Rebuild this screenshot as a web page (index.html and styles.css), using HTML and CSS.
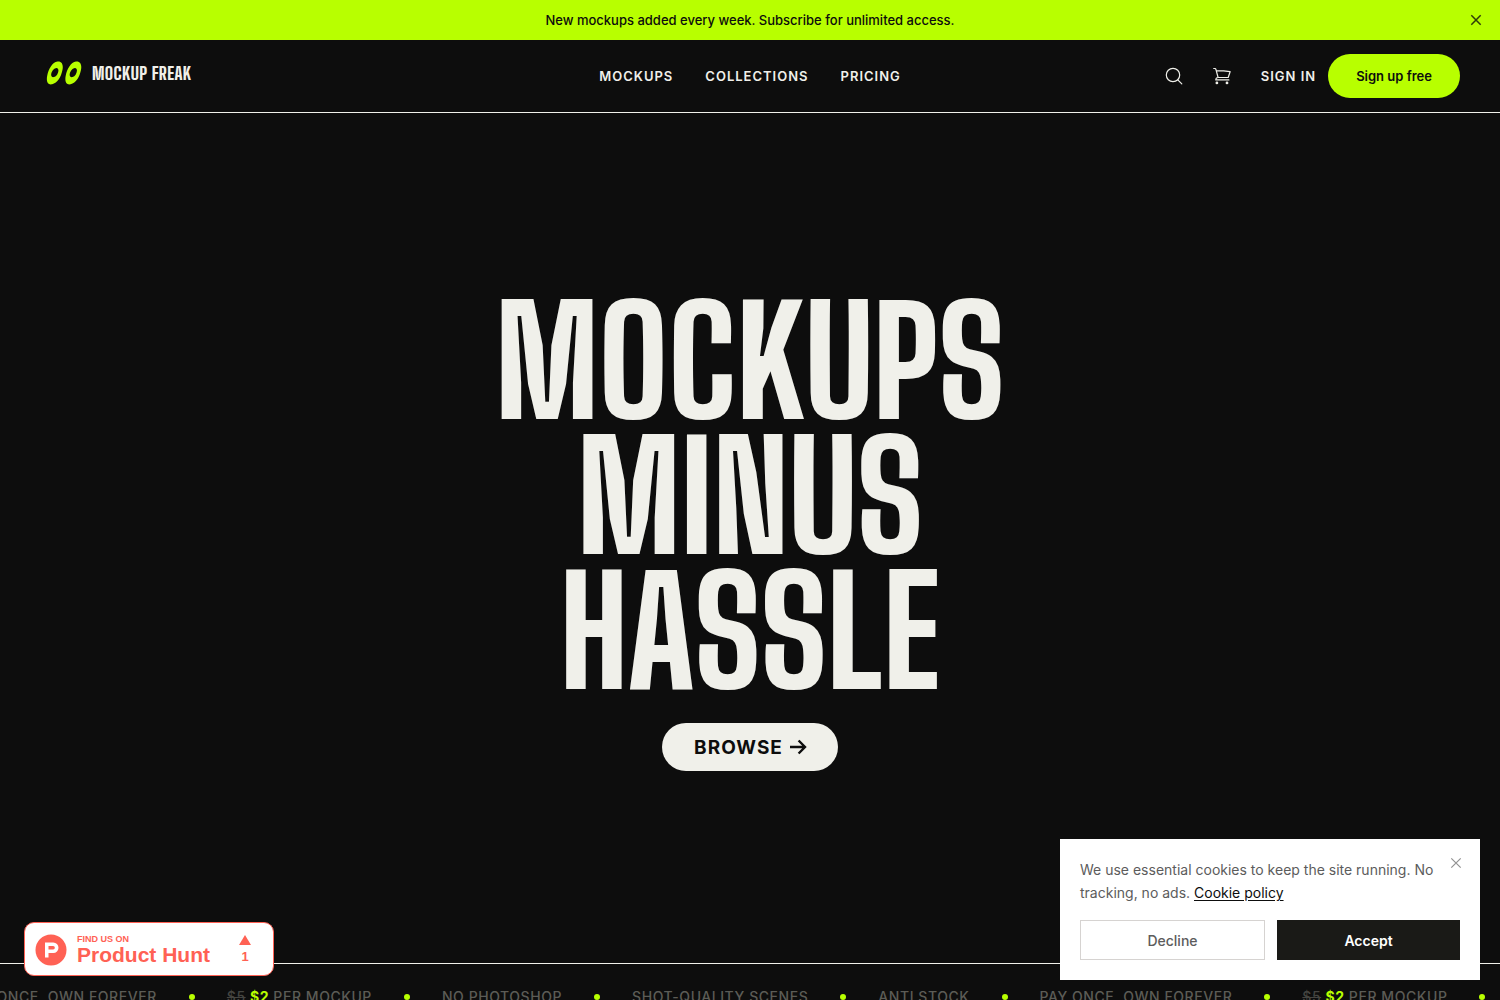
FILE: index.html
```html
<!DOCTYPE html>
<html lang="en">
<head>
<meta charset="utf-8">
<meta name="viewport" content="width=device-width, initial-scale=1">
<title>Mockup Freak</title>
<link rel="stylesheet" href="styles.css">
</head>
<body>
<div class="promo">
  <p class="promo-text">New mockups added every week. Subscribe for unlimited access.</p>
  <button class="promo-close" type="button" aria-label="Dismiss">
    <svg width="16" height="16" viewBox="0 0 16 16" fill="none" stroke="currentColor" stroke-width="1.5"><path d="M3.3 3.3l9.4 9.4M12.7 3.3l-9.4 9.4"/></svg>
  </button>
</div>

<header class="header">
  <a class="logo" href="#">
    <svg width="36" height="24" viewBox="0 0 36 24" aria-hidden="true">
      <g fill="#b8ff00" fill-rule="evenodd">
        <path d="M11.5 0.6C16 0 17.6 4.300 16.400 9.300C15.200 15.500 11.500 22.300 6.100 23.300C1.300 24.200 .2 19.800 1.200 14.800C2.500 8.300 6.300 1.300 11.500 .6ZM9.800 7.200C7.300 7.700 5.500 10.700 5.200 13.200C4.900 15.700 6.300 16.600 8.100 16.100C10.500 15.500 12.200 12.500 12.400 10.100C12.600 7.900 11.600 6.800 9.800 7.200Z"/>
        <path d="M30 .6C34.500 0 36.100 4.300 34.900 9.300C33.700 15.500 30 22.300 24.600 23.300C19.800 24.200 18.700 19.800 19.700 14.800C21 8.300 24.800 1.300 30 .6ZM28.300 7.200C25.800 7.700 24 10.700 23.700 13.200C23.400 15.700 24.800 16.600 26.600 16.100C29 15.500 30.700 12.500 30.900 10.100C31.100 7.900 30.100 6.800 28.300 7.200Z"/>
      </g>
    </svg>
    <span class="logo-name">MOCKUP FREAK</span>
  </a>
  <nav class="nav">
    <a href="#">MOCKUPS</a>
    <a href="#">COLLECTIONS</a>
    <a href="#">PRICING</a>
  </nav>
  <div class="actions">
    <button class="icon-button" type="button" aria-label="Search">
      <svg width="20" height="20" viewBox="0 0 20 20" fill="none" stroke="currentColor" stroke-width="1.2" stroke-linecap="round"><circle cx="9" cy="9" r="6.700"/><path d="M13.800 13.800l4 4"/></svg>
    </button>
    <button class="icon-button" type="button" aria-label="Cart">
      <svg width="20" height="20" viewBox="0 0 20 20" fill="none" stroke="currentColor" stroke-width="1.200" stroke-linecap="round" stroke-linejoin="round"><path d="M1.700 2.500h1.200c.5 0 .9.300 1 .8l2.200 8.200M4.400 4.600c4.800 0 9.300.3 13.700 1.100l-1.900 5.800H6.100c-1.500 0-2.300 1-2.300 2.400h13.100"/><circle cx="4.900" cy="16.900" r=".8" fill="currentColor"/><circle cx="15" cy="16.900" r=".8" fill="currentColor"/></svg>
    </button>
    <a class="sign-in" href="#">SIGN IN</a>
    <a class="sign-up" href="#">Sign up free</a>
  </div>
</header>

<main class="hero">
  <h1 class="headline">MOCKUPS<br>MINUS<br>HASSLE</h1>
  <a class="browse" href="#">BROWSE
    <svg width="18" height="18" viewBox="0 0 18 18" fill="none" stroke="currentColor" stroke-width="2.400" aria-hidden="true"><path d="M1 9h15M9.600 2.500L16 9l-6.400 6.500"/></svg>
  </a>
</main>

<section class="ticker" aria-label="Highlights">
  <ul class="ticker-track">
    <li>PAY ONCE. OWN FOREVER</li>
    <li><s>$5</s> <strong>$2</strong> PER MOCKUP</li>
    <li>NO PHOTOSHOP</li>
    <li>SHOT-QUALITY SCENES</li>
    <li>ANTI STOCK</li>
    <li>PAY ONCE. OWN FOREVER</li>
    <li><s>$5</s> <strong>$2</strong> PER MOCKUP</li>
    <li>NO PHOTOSHOP</li>
  </ul>
</section>

<a class="hunt" href="#">
  <svg class="hunt-logo" width="32" height="32" viewBox="0 0 32 32" aria-hidden="true"><circle cx="16" cy="16" r="15.500" fill="#ff6154"/><path fill="#fff" fill-rule="evenodd" d="M10 8.500h8.300a5.200 5.200 0 0 1 0 10.400H13.500v4.600H10zM13.500 12v3.500h4.600a1.750 1.750 0 0 0 0-3.500z"/></svg>
  <span class="hunt-copy">
    <span class="hunt-kicker">FIND US ON</span>
    <span class="hunt-name">Product Hunt</span>
  </span>
  <span class="hunt-votes">
    <svg width="12" height="10" viewBox="0 0 12 10" aria-hidden="true"><path d="M6 0l6 10H0z" fill="#ff6154"/></svg>
    1
  </span>
</a>

<aside class="cookies" aria-label="Cookie notice">
  <p class="cookies-text">We use essential cookies to keep the site running. No tracking, no ads. <a href="#">Cookie policy</a></p>
  <div class="cookies-actions">
    <button class="decline" type="button">Decline</button>
    <button class="accept" type="button">Accept</button>
  </div>
  <button class="cookies-close" type="button" aria-label="Close">
    <svg width="16" height="16" viewBox="0 0 16 16" fill="none" stroke="currentColor" stroke-width="1.200"><path d="M3.300 3.300l9.400 9.400M12.700 3.300l-9.400 9.400"/></svg>
  </button>
</aside>
</body>
</html>
```
FILE: styles.css
```css
:root {
  --lime: #b8ff00;
  --ink: #0d0d0d;
  --paper: #f0f0ea;
  --coral: #ff6154;
  --narrow: "Big Shoulders Display", "Liberation Sans Narrow", "Roboto Condensed", "Liberation Sans", sans-serif;
}

* { box-sizing: border-box; }

body {
  margin: 0;
  height: 100vh;
  overflow: hidden;
  background: var(--ink);
  color: var(--paper);
  font-family: Inter, "Liberation Sans", sans-serif;
  font-size: 14px;
}

button {
  border: 0;
  padding: 0;
  background: none;
  color: inherit;
  font: inherit;
  cursor: pointer;
}

a { color: inherit; text-decoration: none; }
svg { display: block; flex: none; }

.promo {
  position: relative;
  height: 40px;
  background: var(--lime);
  color: var(--ink);
  display: flex;
  align-items: center;
  justify-content: center;
}
.promo-text { margin: 0; font-size: 13px; font-weight: 500; line-height: 18px; }
.promo-close { position: absolute; right: 16px; top: 12px; opacity: 0.8; }

.header {
  display: grid;
  grid-template-columns: 1fr auto 1fr;
  align-items: center;
  padding: 14px 40px;
  border-bottom: 1px solid var(--paper);
}
.logo { display: flex; align-items: center; gap: 10px; padding: 0 0 6px 6px; }
.logo-name { font-family: var(--narrow); font-size: 18px; font-weight: 800; letter-spacing: 0.02em; white-space: nowrap; }
.nav { display: flex; gap: 32px; font-size: 13px; font-weight: 600; line-height: 18px; letter-spacing: 1px; }
.actions { display: flex; align-items: center; justify-content: flex-end; gap: 12px; }
.icon-button { width: 36px; height: 36px; display: grid; place-items: center; }
.sign-in { margin-left: 9px; font-size: 13px; font-weight: 600; line-height: 18px; letter-spacing: 1px; white-space: nowrap; }
.sign-up {
  padding: 0 28px;
  border-radius: 22px;
  background: var(--lime);
  color: var(--ink);
  font-size: 13px;
  font-weight: 600;
  line-height: 44px;
  white-space: nowrap;
}

.hero {
  min-height: 85vh;
  padding-bottom: 11px;
  display: flex;
  flex-direction: column;
  align-items: center;
  justify-content: center;
  gap: 24px;
}
.headline {
  margin: 0;
  font-family: var(--narrow);
  font-size: 150px;
  font-weight: 800;
  line-height: 135px;
  text-align: center;
}
.browse {
  display: flex;
  align-items: center;
  gap: 6px;
  height: 48px;
  padding: 0 31px 0 32px;
  border-radius: 24px;
  background: var(--paper);
  color: var(--ink);
  font-size: 19px;
  font-weight: 700;
  letter-spacing: 1px;
}

.ticker { overflow: hidden; padding: 24px 0; border-top: 1px solid var(--paper); }
.ticker-track {
  display: flex;
  width: max-content;
  margin: 0 0 0 -36px;
  padding: 0;
  list-style: none;
  color: #5c5c56;
  font-weight: 500;
  line-height: 18px;
  letter-spacing: 0.04em;
  white-space: nowrap;
}
.ticker-track li::after {
  content: "";
  display: inline-block;
  width: 6px;
  height: 6px;
  margin: 0 32px;
  border-radius: 50%;
  background: var(--lime);
  vertical-align: 2px;
}
.ticker-track s { opacity: 0.7; }
.ticker-track strong { color: var(--lime); font-weight: 700; }

.hunt {
  position: fixed;
  left: 24px;
  bottom: 24px;
  width: 250px;
  height: 54px;
  padding: 1px 22px 0 10px;
  display: flex;
  align-items: center;
  gap: 10px;
  border: 1px solid var(--coral);
  border-radius: 10px;
  background: #fff;
  color: var(--coral);
  font-family: "Liberation Sans", sans-serif;
  font-weight: 700;
}
.hunt-copy { display: flex; flex-direction: column; flex: 1; white-space: nowrap; }
.hunt-kicker { font-size: 9px; line-height: 10px; }
.hunt-name { font-size: 21px; line-height: 22px; }
.hunt-votes { display: flex; flex-direction: column; align-items: center; gap: 5px; font-size: 13px; line-height: 14px; }

.cookies {
  position: fixed;
  right: 20px;
  bottom: 20px;
  width: 420px;
  max-width: calc(100% - 40px);
  padding: 19px 20px 20px;
  background: #fff;
  color: #5c5c5c;
}
.cookies-text { margin: 0 20px 16px 0; line-height: 23px; }
.cookies-text a { color: var(--ink); text-decoration: underline; text-underline-offset: 2px; }
.cookies-actions { display: flex; gap: 12px; }
.decline, .accept { flex: 1; height: 40px; font-weight: 500; }
.decline { border: 1px solid #d6d3d1; }
.accept { background: #1a1a17; color: #fff; font-weight: 600; }
.cookies-close { position: absolute; top: 16px; right: 16px; color: #929292; }
```
